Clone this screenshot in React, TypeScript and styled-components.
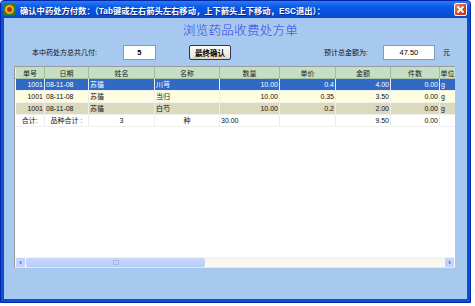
import React from "react";
import styled, { createGlobalStyle } from "styled-components";

const Global = createGlobalStyle`
  html, body { margin: 0; padding: 0; background: #ffffff; }
  body { font-family: "Liberation Sans", "Noto Sans CJK SC", sans-serif; }
`;

const UI = `"Liberation Sans", "Noto Sans CJK SC", sans-serif`;

const Window = styled.div`
  width: 471px;
  height: 303px;
  box-sizing: border-box;
  display: flex;
  flex-direction: column;
  background: #0a4fd8;
  border: 1px solid #0025a8;
  border-radius: 4px 4px 0 0;
  overflow: hidden;
`;

const TitleBar = styled.div`
  height: 17px;
  flex: none;
  display: flex;
  align-items: center;
  padding: 0 3px 0 2px;
  background: linear-gradient(#2a7cf7 0%, #0a5ae6 35%, #0451dc 70%, #0a49c8 100%);
`;

const TitleIcon = styled.svg`
  width: 13px;
  height: 13px;
  flex: none;
`;

const TitleText = styled.div`
  margin-left: 4px;
  color: #ffffff;
  font: bold 8.3px ${UI};
  white-space: nowrap;
  flex: 1;
  text-shadow: 1px 1px 0 #0a2a8a;
`;

const CloseButton = styled.div`
  width: 13px;
  height: 13px;
  flex: none;
  box-sizing: border-box;
  border: 1px solid #ffffff;
  border-radius: 2px;
  background: linear-gradient(135deg, #f28a6a, #d8421c 60%, #c33410);
  display: flex;
  align-items: center;
  justify-content: center;
`;

const Client = styled.div`
  flex: 1;
  margin: 0 3px 3px 3px;
  background: #a7c9ef;
  display: flex;
  flex-direction: column;
  padding: 0 12px 0 10px;
  min-width: 0;
`;

const Heading = styled.div`
  height: 23px;
  display: flex;
  align-items: center;
  justify-content: center;
  padding-left: 12px;
  color: #3040ea;
  font: 300 12.5px "Noto Sans CJK SC", serif;
  letter-spacing: 0.3px;
`;

const ControlRow = styled.div`
  height: 22px;
  display: flex;
  align-items: center;
  padding-left: 18px;
`;

const Label = styled.span<{ $gap?: number }>`
  margin-left: ${(p) => p.$gap ?? 0}px;
  font: 7px ${UI};
  color: #111;
  white-space: nowrap;
`;

const ValueBox = styled.div<{ $gap: number; $w: number; $bold?: boolean }>`
  margin-left: ${(p) => p.$gap}px;
  width: ${(p) => p.$w}px;
  height: 15px;
  flex: none;
  box-sizing: border-box;
  background: #fff;
  border: 1px solid #7f9db9;
  display: flex;
  align-items: center;
  justify-content: center;
  font: ${(p) => (p.$bold ? "bold" : "normal")} 7.5px ${UI};
  color: #000;
`;

const ConfirmButton = styled.div`
  margin-left: 33px;
  width: 42px;
  height: 15px;
  flex: none;
  box-sizing: border-box;
  border: 1px solid #33335a;
  border-radius: 2px;
  background: linear-gradient(#fbfbf8, #ece9d8 80%, #d6d0c0);
  display: flex;
  align-items: center;
  justify-content: center;
  font: bold 7.5px ${UI};
  color: #000;
  white-space: nowrap;
`;

const Grid = styled.div`
  margin-top: 3px;
  width: 441px;
  height: 202px;
  box-sizing: border-box;
  background: #ffffff;
  border-left: 1px solid #9a9a9a;
  border-top: 1px solid #9a9a9a;
  display: flex;
  flex-direction: column;
  overflow: hidden;
`;

const TableWrap = styled.div`
  flex: 1;
  overflow: hidden;
  min-width: 0;
`;

const Table = styled.table`
  border-collapse: collapse;
  table-layout: fixed;
  width: 440px;
  font: 7px ${UI};
`;

const HeadCell = styled.th`
  height: 11px;
  padding: 0;
  background: #c4dfc4;
  border-right: 1px solid #9fbf9f;
  border-left: 1px solid #e6f2e6;
  border-bottom: 1px solid #a8c4a8;
  font-weight: normal;
  color: #222;
  text-align: center;
  white-space: nowrap;
  overflow: hidden;
`;

type Variant = "sel" | "light" | "tan" | "total";

const rowBg: Record<Variant, string> = {
  sel: "#316ac5",
  light: "#fdfde0",
  tan: "#dcdabd",
  total: "#ffffff",
};

const Row = styled.tr<{ $v: Variant }>`
  background: ${(p) => rowBg[p.$v]};
  color: ${(p) => (p.$v === "sel" ? "#ffffff" : "#111111")};
`;

const Cell = styled.td<{ $align?: "left" | "right" | "center" }>`
  height: 11px;
  padding: 0 1px;
  text-align: ${(p) => p.$align ?? "left"};
  border-right: 1px solid #ededed;
  border-bottom: 1px solid #f0f0f0;
  white-space: nowrap;
  overflow: hidden;
  line-height: 10px;
`;

const ScrollBar = styled.div`
  height: 10px;
  flex: none;
  display: flex;
  align-items: center;
  background: linear-gradient(#f4f3ea, #fbfbf6);
  padding: 0 1px;
  border-bottom: 1px solid #e6e6e6;
`;

const ScrollArrow = styled.div`
  width: 9px;
  height: 9px;
  flex: none;
  border-radius: 1px;
  background: #c3d3fd;
  color: #4d6185;
  font: bold 8px ${UI};
  display: flex;
  align-items: center;
  justify-content: center;
`;

const ScrollThumb = styled.div`
  width: 179px;
  height: 9px;
  margin-left: 1px;
  border-radius: 2px;
  background: linear-gradient(#c9d8fb, #b9cdf8);
  display: flex;
  align-items: center;
  justify-content: center;
`;

const Grip = styled.div`
  width: 4px;
  height: 3px;
  border: 1px solid #a3b8e8;
`;

const ScrollTrack = styled.div`
  flex: 1;
`;

const cols = [29, 44, 66, 65, 60, 56, 55, 49, 16];
const headers = ["单号", "日期", "姓名", "名称", "数量", "单价", "金额", "件数", "单位"];

type Data = { v: Variant; c: [string, "left" | "right" | "center"][] };

const rows: Data[] = [
  {
    v: "sel",
    c: [["1001", "right"], ["08-11-08", "left"], ["苏循", "left"], ["川芎", "left"], ["10.00", "right"], ["0.4", "right"], ["4.00", "right"], ["0.00", "right"], ["g", "left"]],
  },
  {
    v: "light",
    c: [["1001", "right"], ["08-11-08", "left"], ["苏循", "left"], ["当归", "left"], ["10.00", "right"], ["0.35", "right"], ["3.50", "right"], ["0.00", "right"], ["g", "left"]],
  },
  {
    v: "tan",
    c: [["1001", "right"], ["08-11-08", "left"], ["苏循", "left"], ["白芍", "left"], ["10.00", "right"], ["0.2", "right"], ["2.00", "right"], ["0.00", "right"], ["g", "left"]],
  },
  {
    v: "total",
    c: [["合计:", "center"], ["品种合计 :", "center"], ["3", "center"], ["种", "center"], ["30.00", "left"], ["", "left"], ["9.50", "right"], ["0.00", "right"], ["", "left"]],
  },
];

export default function App() {
  return (
    <>
      <Global />
      <Window>
        <TitleBar>
          <TitleIcon viewBox="0 0 13 13">
            <rect x="0.5" y="0.5" width="12" height="12" rx="2" fill="#3a7a2a" />
            <circle cx="6.5" cy="6.5" r="4.5" fill="#e8b020" />
            <circle cx="6.5" cy="6.5" r="2.5" fill="#c83018" />
            <circle cx="6.5" cy="6.5" r="1" fill="#2a6a20" />
          </TitleIcon>
          <TitleText>确认中药处方付数：（Tab键或左右箭头左右移动，上下箭头上下移动，ESC退出）：</TitleText>
          <CloseButton>
            <svg width="9" height="9" viewBox="0 0 9 9">
              <path d="M1.5 1.5 L7.5 7.5 M7.5 1.5 L1.5 7.5" stroke="#fff" strokeWidth="1.8" />
            </svg>
          </CloseButton>
        </TitleBar>
        <Client>
          <Heading>浏览药品收费处方单</Heading>
          <ControlRow>
            <Label>本中药处方总共几付:</Label>
            <ValueBox $gap={26} $w={33} $bold>5</ValueBox>
            <ConfirmButton>最终确认</ConfirmButton>
            <Label $gap={93}>预计总金额为:</Label>
            <ValueBox $gap={15} $w={52}>47.50</ValueBox>
            <Label $gap={8}>元</Label>
          </ControlRow>
          <Grid>
            <TableWrap>
              <Table>
                <colgroup>
                  {cols.map((w, i) => (
                    <col key={i} style={{ width: w }} />
                  ))}
                </colgroup>
                <thead>
                  <tr>
                    {headers.map((h) => (
                      <HeadCell key={h}>{h}</HeadCell>
                    ))}
                  </tr>
                </thead>
                <tbody>
                  {rows.map((r, i) => (
                    <Row key={i} $v={r.v}>
                      {r.c.map(([t, a], j) => (
                        <Cell key={j} $align={a}>{t}</Cell>
                      ))}
                    </Row>
                  ))}
                </tbody>
              </Table>
            </TableWrap>
            <ScrollBar>
              <ScrollArrow>‹</ScrollArrow>
              <ScrollThumb>
                <Grip />
              </ScrollThumb>
              <ScrollTrack />
              <ScrollArrow>›</ScrollArrow>
            </ScrollBar>
          </Grid>
        </Client>
      </Window>
    </>
  );
}
